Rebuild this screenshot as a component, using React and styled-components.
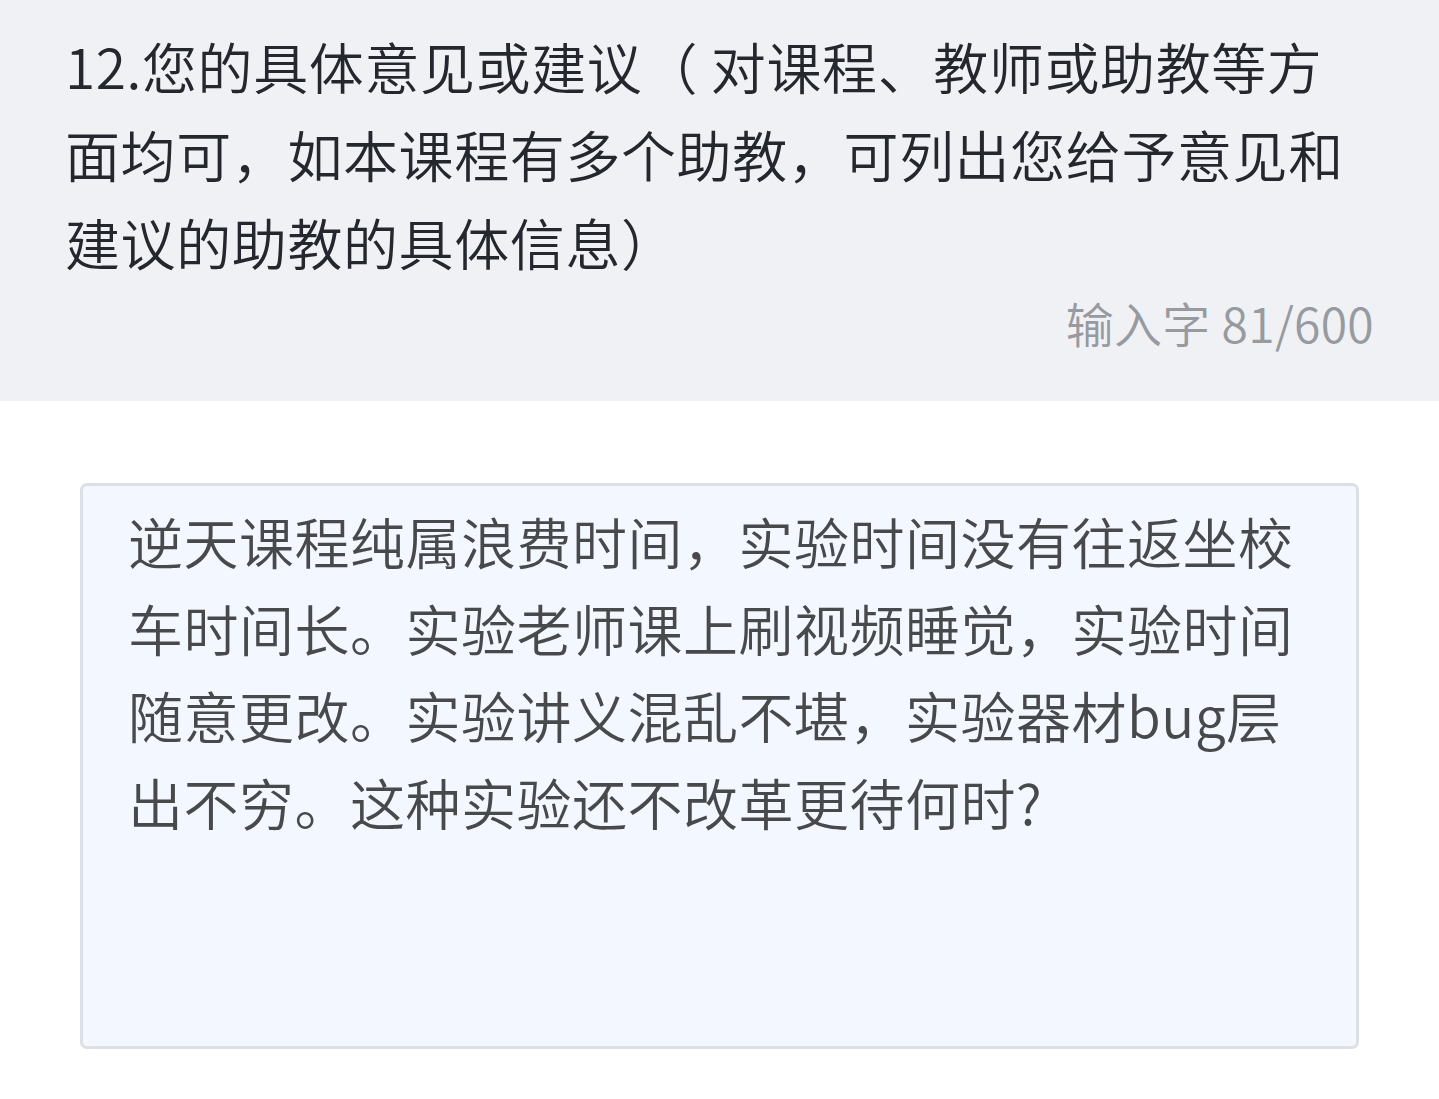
import React from "react";
import styled, { createGlobalStyle } from "styled-components";

const GlobalStyle = createGlobalStyle`
  html, body {
    margin: 0;
    padding: 0;
    background: #ffffff;
  }
  body {
    font-family: "Noto Sans CJK SC", "Noto Sans", sans-serif;
  }
`;

const Page = styled.div`
  width: 1439px;
  min-height: 1099px;
  background: #ffffff;
`;

const QuestionHeader = styled.div`
  background: #f0f1f5;
  padding: 21px 65px 49px 65px;
  height: 401px;
  box-sizing: border-box;
  display: flex;
  flex-direction: column;
`;

const Title = styled.div`
  color: #24282e;
  font-size: 55px;
  font-weight: 350;
  line-height: 88px;
  letter-spacing: 0.6px;
`;

const Counter = styled.div`
  margin-top: auto;
  align-self: flex-end;
  color: #979a9f;
  font-size: 48px;
  font-weight: 350;
  line-height: 60px;
  letter-spacing: 0.3px;
`;

const Body = styled.div`
  padding: 82px 80px 0 80px;
`;

const AnswerBox = styled.div`
  height: 566px;
  box-sizing: border-box;
  background: #f3f7ff;
  border: 3px solid #dcdfe5;
  border-radius: 7px;
  padding: 11px 46px 0 45px;
  color: #48494b;
  font-size: 55px;
  font-weight: 350;
  line-height: 87px;
  letter-spacing: 0.5px;
`;

export default function App() {
  return (
    <Page>
      <GlobalStyle />
      <QuestionHeader>
        <Title>
          12.您的具体意见或建议（ 对课程、教师或助教等方面均可，如本课程有多个助教，可列出您给予意见和建议的助教的具体信息）
        </Title>
        <Counter>输入字 81/600</Counter>
      </QuestionHeader>
      <Body>
        <AnswerBox>
          逆天课程纯属浪费时间，实验时间没有往返坐校车时间长。实验老师课上刷视频睡觉，实验时间随意更改。实验讲义混乱不堪，实验器材bug层出不穷。这种实验还不改革更待何时?
        </AnswerBox>
      </Body>
    </Page>
  );
}
